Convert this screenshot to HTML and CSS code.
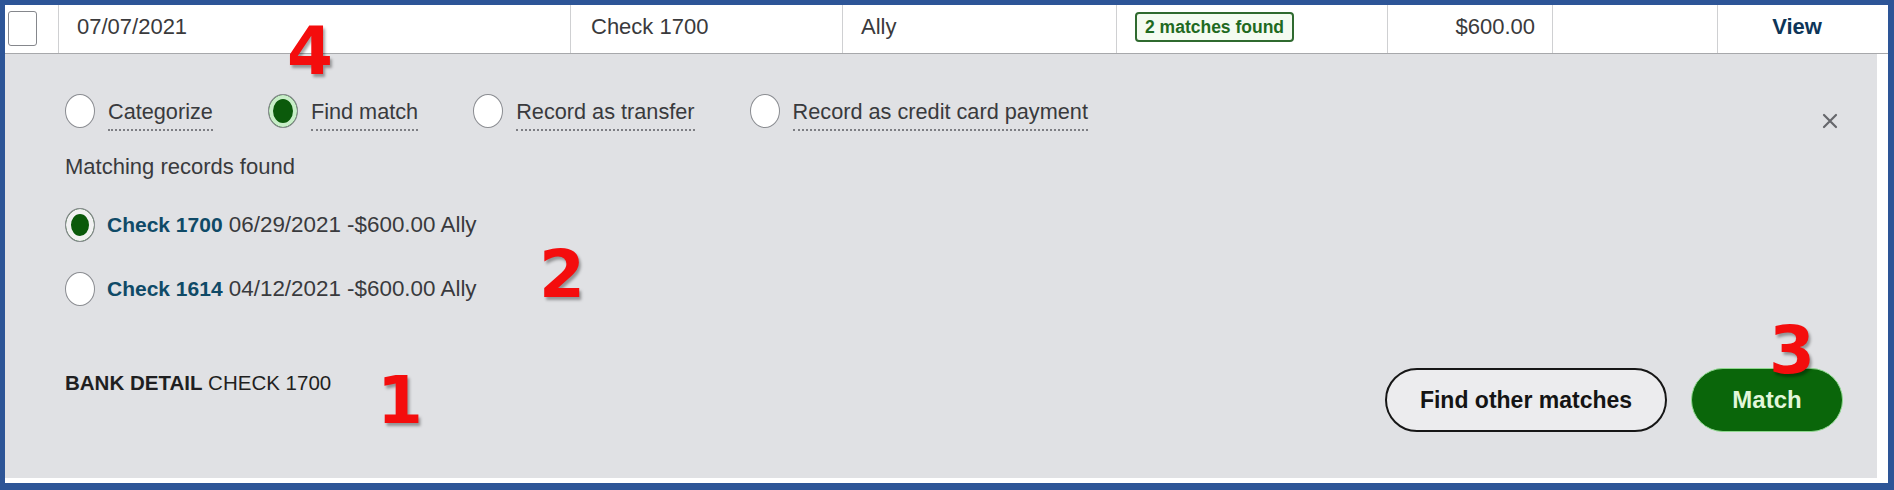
FILE: index.html
```html
<!DOCTYPE html>
<html lang="en">
<head>
    <meta charset="UTF-8">
    <meta name="viewport" content="width=device-width, initial-scale=1.0">
    <title>Bank transaction - Find match</title>
    <link rel="stylesheet" href="styles.css">
</head>
<body>

    <div class="frame">
        <div class="txn-row">
            <div class="cell cell-check"><span class="checkbox"></span></div>
            <div class="cell">07/07/2021</div>
            <div class="cell">Check 1700</div>
            <div class="cell">Ally</div>
            <div class="cell"><span class="badge">2 matches found</span></div>
            <div class="cell cell-amount">$600.00</div>
            <div class="cell"></div>
            <div class="cell cell-action"><a class="view-link">View</a></div>
        </div>

        <div class="detail">
            <div class="options">
                <label class="option"><span class="radio"></span><span class="option-label">Categorize</span></label>
                <label class="option"><span class="radio radio-on"></span><span class="option-label">Find match</span></label>
                <label class="option"><span class="radio"></span><span class="option-label">Record as transfer</span></label>
                <label class="option"><span class="radio"></span><span class="option-label">Record as credit card payment</span></label>
                <button class="close" aria-label="Close">
                    <svg width="16" height="16" viewBox="0 0 16 16"><path d="M2 2 L14 14 M14 2 L2 14" stroke="#66676c" stroke-width="2.2" stroke-linecap="round"/></svg>
                </button>
            </div>

            <div class="heading">Matching records found</div>

            <div class="records">
                <div class="record"><span class="radio radio-picked"></span><span><span class="record-ref">Check 1700</span> 06/29/2021 -$600.00 Ally</span></div>
                <div class="record"><span class="radio"></span><span><span class="record-ref">Check 1614</span> 04/12/2021 -$600.00 Ally</span></div>
            </div>

            <div class="footer">
                <div class="bank-detail"><b>BANK DETAIL</b> CHECK 1700</div>
                <div class="actions">
                    <button class="btn btn-outline">Find other matches</button>
                    <button class="btn btn-primary">Match</button>
                </div>
            </div>
        </div>

        <!-- red step numbers drawn on top of the screenshot -->
        <span class="callout step-4">4</span>
        <span class="callout step-2">2</span>
        <span class="callout step-3">3</span>
        <span class="callout step-1">1</span>
    </div>

</body>
</html>
```

FILE: styles.css
```css
* {
    margin: 0;
    padding: 0;
    box-sizing: border-box;
}

body {
    width: 1894px;
    height: 490px;
    background: #ffffff;
    font-family: "Liberation Sans", Arial, sans-serif;
    color: #393a3d;
    overflow: hidden;
}

.frame {
    position: relative;
    width: 1894px;
    height: 490px;
    border-style: solid;
    border-color: #2d5597;
    border-width: 5px 6px 7px 5px;
    background: #ffffff;
}

/* transaction row */
.txn-row {
    display: grid;
    grid-template-columns: 53px 512px 272px 274px 271px 165px 165px 1fr;
    height: 49px;
    background: #ffffff;
    border-bottom: 1px solid #a7a8ab;
}

.cell {
    display: flex;
    align-items: center;
    padding: 0 18px 4px;
    font-size: 22px;
    color: #3a3a3c;
    border-left: 1px solid #cfd0d2;
}

.cell:nth-child(3) {
    padding-left: 20px;
}

.cell-check {
    border-left: none;
    padding: 0 0 2px 3px;
}

.checkbox {
    width: 29px;
    height: 35px;
    border: 1.5px solid #85878c;
    border-radius: 3px;
    background: #ffffff;
}

.badge {
    display: inline-block;
    height: 30px;
    line-height: 26px;
    padding: 0 8px;
    border: 2px solid #2f6a2f;
    border-radius: 4px;
    background: #f4fbf1;
    color: #1f6a1f;
    font-size: 17.5px;
    font-weight: bold;
}

.cell-amount {
    justify-content: flex-end;
    padding-right: 17px;
}

.cell-action {
    justify-content: center;
    padding-right: 30px;
}

.view-link {
    color: #0d3558;
    font-weight: bold;
    font-size: 22px;
}

/* expanded detail panel */
.detail {
    height: 424px;
    margin-right: 11px;
    padding: 40px 34px 46px 60px;
    background: #e0e1e4;
}

.options {
    display: flex;
    align-items: flex-start;
    gap: 55px;
    height: 34px;
}

.option {
    display: flex;
    align-items: flex-start;
    gap: 13px;
}

.radio {
    flex: none;
    display: inline-block;
    width: 30px;
    height: 34px;
    border: 1.5px solid #8a8c91;
    border-radius: 50%;
    background: #ffffff;
}

.radio-on {
    background: #0b5a0b;
    box-shadow: inset 0 0 0 4px #c8eec8;
}

.radio-picked {
    background: #0b5a0b;
    box-shadow: inset 0 0 0 5px #f2f2f2;
}

.option-label {
    margin-top: 5px;
    font-size: 21.7px;
    line-height: 26px;
    padding-bottom: 4px;
    border-bottom: 2px dotted #7d7e83;
}

.close {
    margin: 19px 5px 0 auto;
    border: none;
    background: none;
    width: 16px;
    height: 16px;
}

.close svg {
    display: block;
}

.heading {
    margin-top: 26px;
    font-size: 22px;
    line-height: 26px;
}

.records {
    display: flex;
    flex-direction: column;
    gap: 30px;
    margin-top: 28px;
}

.record {
    display: flex;
    align-items: center;
    gap: 12px;
    height: 34px;
    font-size: 22.4px;
}

.record-ref {
    color: #0f4a67;
    font-weight: bold;
    font-size: 21px;
}

.footer {
    display: flex;
    justify-content: space-between;
    align-items: flex-start;
    margin-top: 62px;
}

.bank-detail {
    margin-top: 2px;
    font-size: 20.5px;
    line-height: 26px;
    color: #1f1f21;
}

.actions {
    display: flex;
    gap: 24px;
}

.btn {
    height: 64px;
    border-radius: 32px;
    font-family: "Liberation Sans", Arial, sans-serif;
    font-weight: bold;
    font-size: 23px;
    cursor: pointer;
}

.btn-outline {
    width: 282px;
    border: 2.5px solid #161616;
    background: #ececee;
    color: #141414;
}

.btn-primary {
    width: 152px;
    border: 1.5px solid #8fd88f;
    background: #0a660a;
    color: #e2f7da;
    font-size: 24px;
}

/* red step numbers */
.callout {
    position: absolute;
    transform: translateX(-50%);
    font-family: "DejaVu Sans", sans-serif;
    font-weight: bold;
    font-size: 66px;
    line-height: 1;
    color: #f40d0d;
    text-shadow: 2px 3px 3px rgba(0, 0, 0, 0.35);
}

.step-4 { left: 305px; top: 14px; }
.step-2 { left: 557px; top: 237px; }
.step-3 { left: 1787px; top: 313px; }
.step-1 { left: 395px; top: 363px; }
```
